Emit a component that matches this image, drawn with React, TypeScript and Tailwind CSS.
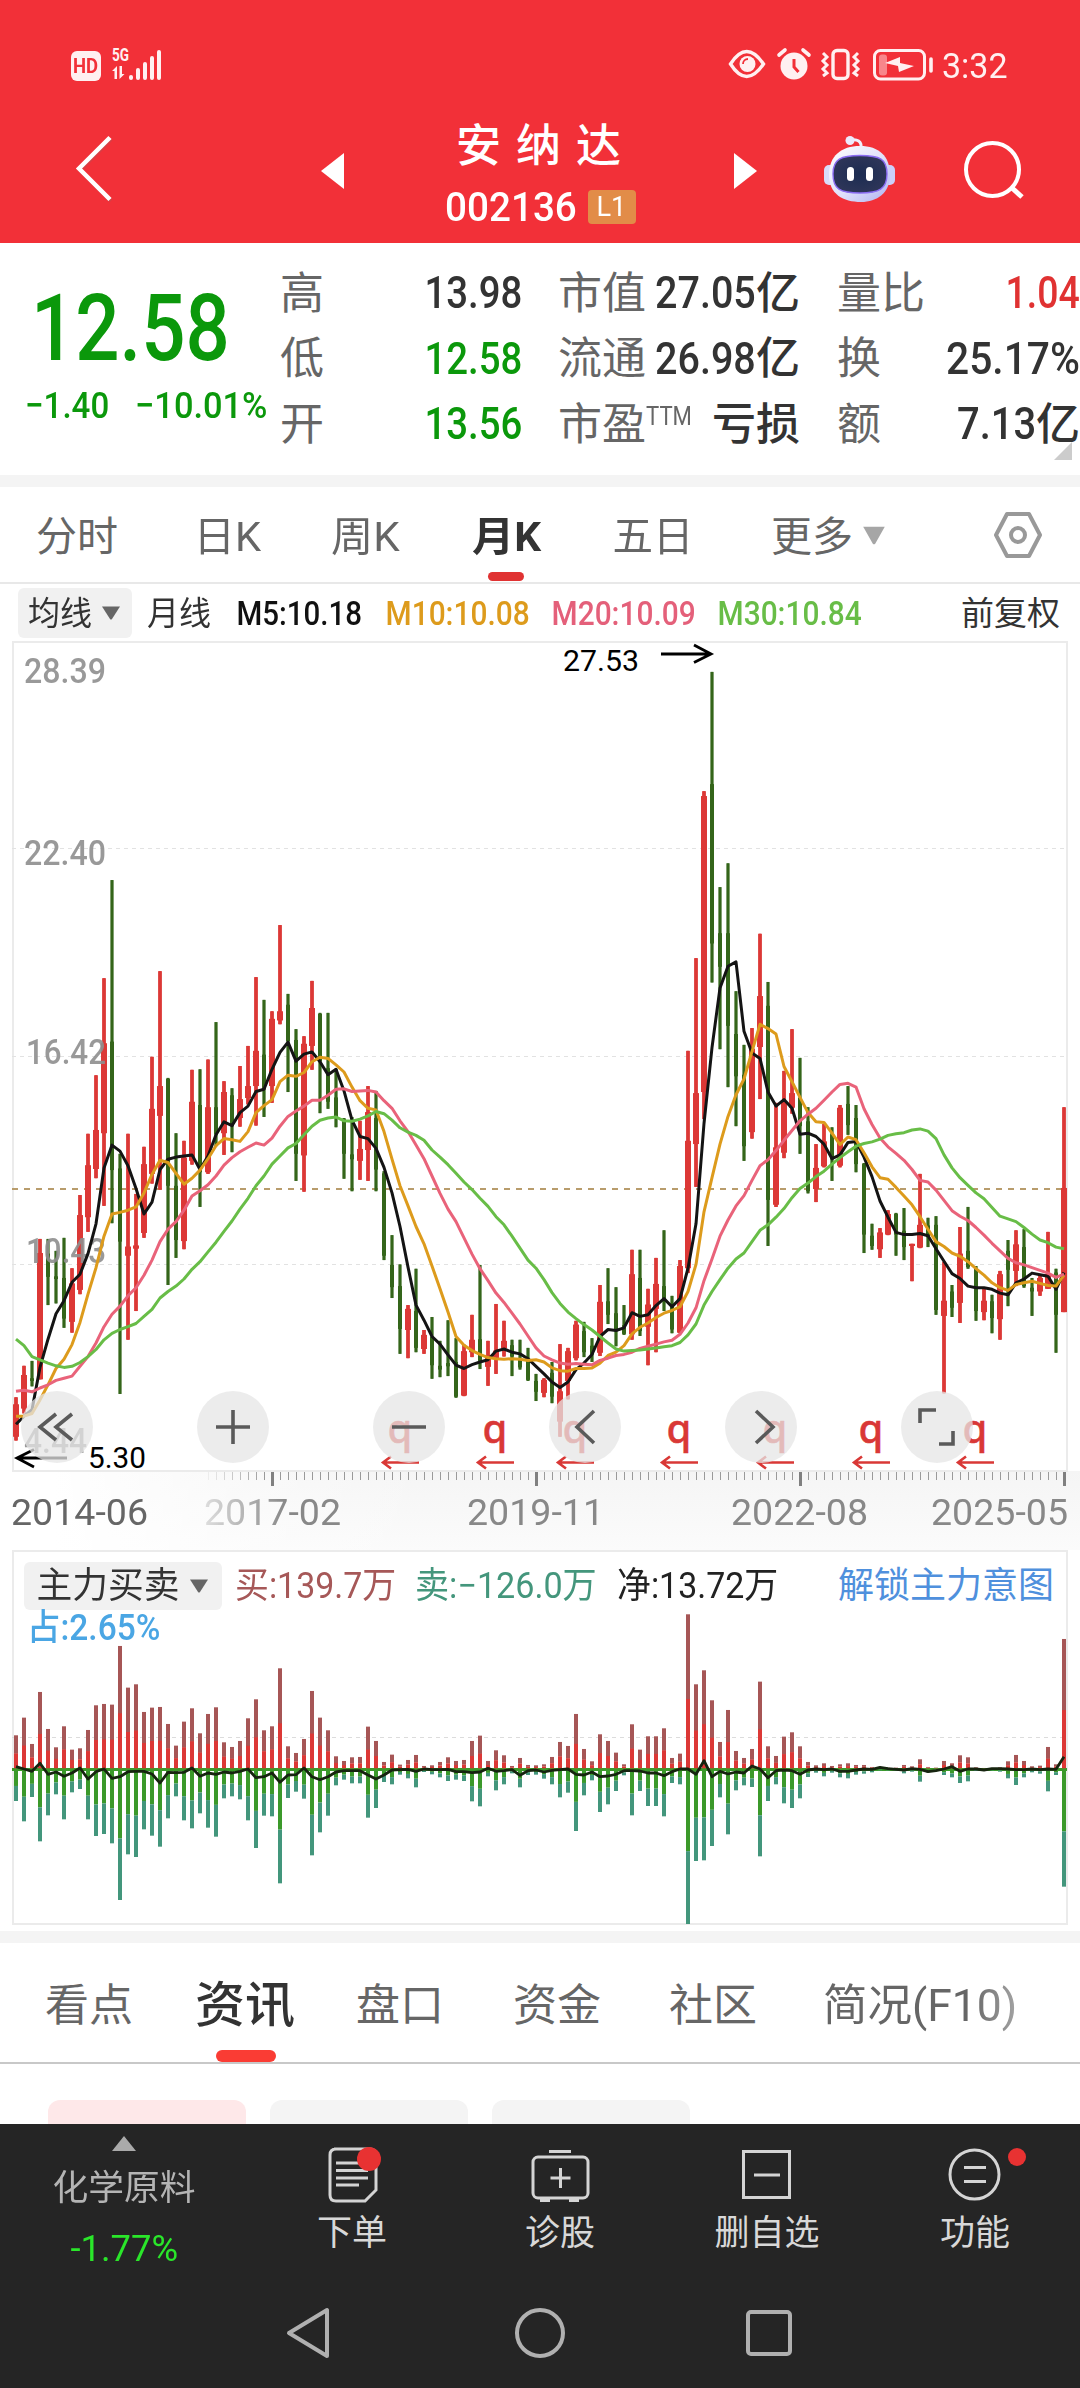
import React, { useLayoutEffect, useRef, useState } from "react";

/** Text condensed or stretched horizontally so that it fills exactly `w` pixels. */
function Fit({ w, className = "", children }: { w: number; className?: string; children: React.ReactNode }) {
  const ref = useRef<HTMLSpanElement>(null);
  const [s, setS] = useState(1);
  useLayoutEffect(() => {
    if (ref.current) setS(w / ref.current.offsetWidth);
  }, [w]);
  return (
    <span className={"inline-flex shrink-0 justify-center whitespace-nowrap leading-none " + className} style={{ width: w }}>
      <span ref={ref} className="shrink-0" style={{ transform: `scaleX(${s})` }}>
        {children}
      </span>
    </span>
  );
}

type Candle = [number, number, number, number, 0 | 1];

// high, low, body top, body bottom, rising
const CANDLES: Candle[] = [
  [1395,1475,1408,1468,1],[1337,1425,1354,1416,1],[1328,1375,1360,1365,0],[1103,1362,1129,1362,1],[1103,1225,1130,1173,0],
  [1125,1222,1172,1177,0],[1101,1267,1175,1250,0],[1157,1276,1185,1256,1],[1022,1205,1059,1197,1],[909,1090,967,1063,1],
  [801,991,902,974,1],[622,1042,742,908,1],[441,1074,739,976,0],[946,1389,973,1108,0],[909,1289,1117,1134,1],
  [1020,1236,1115,1121,1],[933,1101,965,1092,1],[767,1001,863,983,1],[609,1012,821,876,1],[806,1188,808,1005,0],
  [908,1138,1005,1105,0],[922,1122,953,1107,1],[791,966,850,959,1],[790,1044,856,980,0],[772,983,860,980,1],
  [703,932,860,910,0],[812,948,832,908,1],[825,943,838,895,0],[784,896,845,880,1],[747,855,821,843,1],
  [620,894,756,821,1],[662,878,763,827,0],[683,852,697,821,1],[524,707,683,700,1],[651,832,671,738,0],
  [716,996,736,946,0],[729,1016,743,949,1],[627,791,677,747,1],[686,871,688,775,0],[686,863,788,850,0],
  [789,897,842,878,0],[880,992,882,946,0],[878,1015,947,956,0],[885,994,937,959,1],[821,996,869,939,1],
  [830,1015,880,975,0],[978,1142,982,1134,0],[1096,1212,1151,1192,0],[1150,1315,1190,1269,0],[1225,1323,1232,1271,1],
  [1158,1312,1236,1304,0],[1271,1315,1280,1306,1],[1247,1361,1284,1336,0],[1291,1358,1337,1344,0],[1253,1356,1332,1338,0],
  [1286,1396,1330,1394,0],[1298,1393,1310,1392,1],[1243,1321,1289,1312,1],[1151,1343,1288,1328,0],[1291,1374,1317,1339,1],
  [1223,1352,1309,1323,1],[1254,1320,1291,1305,1],[1289,1356,1299,1320,0],[1289,1344,1325,1340,0],[1304,1365,1328,1363,0],
  [1352,1402,1365,1385,0],[1360,1395,1363,1387,1],[1330,1406,1350,1394,0],[1297,1468,1384,1440,1],[1304,1399,1310,1365,1],
  [1254,1327,1261,1323,1],[1256,1321,1273,1312,0],[1286,1330,1300,1316,0],[1188,1319,1219,1313,1],[1157,1260,1218,1243,0],
  [1192,1301,1240,1273,0],[1225,1280,1262,1278,0],[1123,1289,1168,1279,1],[1123,1282,1175,1273,0],[1195,1336,1224,1265,1],
  [1138,1312,1186,1232,1],[1087,1236,1190,1214,0],[1208,1277,1224,1270,0],[1142,1277,1153,1276,1],[756,1166,922,1157,1],
  [585,1007,834,928,1],[277,882,286,832,1],[57,630,264,558,0],[454,753,539,601,0],[410,823,539,710,0],
  [646,895,725,803,0],[745,959,800,932,0],[714,918,752,906,1],[540,845,655,749,1],[629,1116,673,1031,0],
  [852,1044,934,1040,1],[793,954,850,944,1],[716,872,834,861,1],[769,946,843,895,0],[860,1019,886,1015,0],
  [928,1035,972,1011,1],[891,971,923,969,1],[897,996,910,956,0],[856,971,861,968,1],[821,911,854,893,0],
  [856,980,880,965,0],[963,1129,965,1095,0],[1075,1123,1097,1116,0],[1083,1138,1091,1122,1],[1050,1096,1057,1095,1],
  [1055,1134,1057,1095,0],[1046,1142,1088,1118,0],[1112,1181,1112,1116,1],[983,1120,1077,1119,1],[1064,1118,1078,1100,0],
  [1061,1243,1077,1234,0],[1145,1388,1217,1245,1],[1188,1247,1200,1230,0],[1081,1258,1130,1221,1],[1044,1158,1125,1155,0],
  [1153,1254,1158,1236,0],[1195,1253,1217,1238,1],[1206,1277,1218,1249,0],[1162,1289,1168,1251,1],[1105,1227,1125,1160,0],
  [1087,1190,1113,1162,1],[1085,1193,1118,1190,0],[1175,1245,1193,1200,0],[1168,1208,1175,1200,1],[1090,1195,1168,1195,1],
  [1158,1313,1165,1243,0],[860,1238,1009,1238,1],
];

const MA5 = [1445,1430,1418,1340,1288,1241,1217,1183,1168,1130,1075,972,930,941,968,1010,1057,1035,975,956,952,950,948,975,950,911,887,894,870,858,831,827,790,759,740,775,762,758,776,800,790,830,884,914,918,936,971,1018,1080,1155,1225,1253,1283,1297,1317,1336,1342,1335,1330,1326,1310,1306,1312,1315,1324,1338,1352,1367,1377,1367,1344,1332,1316,1283,1270,1272,1267,1239,1246,1243,1226,1213,1228,1213,1157,1075,890,750,640,600,592,720,760,770,832,858,846,862,910,908,914,928,955,948,925,923,952,988,1033,1063,1091,1095,1095,1093,1097,1121,1144,1167,1176,1190,1193,1193,1196,1203,1206,1184,1177,1166,1169,1172,1196,1165];
const MA10 = [1430,1430,1425,1400,1372,1342,1325,1298,1257,1205,1156,1098,1057,1054,1050,1044,1018,984,958,962,982,1002,991,976,955,931,918,920,923,905,870,857,846,813,801,803,796,776,768,770,782,795,823,848,862,865,905,956,1005,1042,1080,1112,1153,1195,1238,1283,1299,1309,1316,1322,1324,1325,1324,1325,1327,1326,1330,1341,1346,1347,1342,1342,1341,1332,1318,1312,1300,1278,1266,1258,1248,1240,1235,1228,1200,1150,1053,990,928,877,837,808,757,707,715,725,785,813,842,870,887,888,908,929,915,920,944,970,990,993,1008,1024,1040,1062,1085,1108,1117,1129,1135,1145,1158,1170,1184,1193,1198,1187,1184,1181,1185,1189,1190,1170];
const MA20 = [1384,1382,1385,1378,1372,1364,1360,1356,1338,1320,1295,1265,1242,1227,1208,1193,1170,1142,1108,1085,1071,1050,1024,1014,1003,987,967,953,942,934,926,930,917,895,877,867,858,847,847,838,827,826,831,830,829,832,848,862,885,905,930,955,987,1019,1048,1071,1101,1131,1158,1180,1203,1220,1240,1260,1282,1304,1319,1326,1332,1334,1333,1334,1335,1327,1323,1318,1316,1312,1305,1301,1297,1293,1290,1279,1258,1230,1180,1140,1098,1068,1042,1023,995,968,957,940,921,903,885,873,862,847,832,818,816,823,863,892,917,933,945,958,975,995,998,1013,1032,1051,1061,1069,1082,1096,1111,1125,1139,1147,1151,1156,1161,1166,1174,1168];
const MA30 = [1288,1300,1320,1326,1332,1337,1340,1338,1331,1320,1307,1289,1277,1270,1265,1259,1246,1233,1212,1200,1190,1177,1159,1145,1127,1109,1089,1070,1048,1028,1005,987,965,950,935,927,911,895,884,880,878,885,886,882,876,868,872,884,898,906,912,921,939,952,966,982,998,1012,1028,1043,1062,1077,1098,1120,1142,1157,1178,1202,1222,1238,1250,1261,1271,1283,1295,1306,1310,1309,1308,1306,1304,1302,1300,1294,1280,1260,1225,1200,1178,1157,1140,1129,1108,1087,1077,1063,1047,1027,1010,1000,988,978,965,953,942,932,927,924,919,912,909,907,902,900,904,918,948,972,990,1004,1018,1029,1045,1061,1066,1071,1082,1094,1105,1110,1118,1121];

const SCALE = 1.8447;
const X = (i: number) => 16 + i * 8;
const Y = (v: number) => v / SCALE;
const line = (a: number[], f: (v: number) => number) => a.map((v, i) => `${X(i)},${f(v).toFixed(1)}`).join(" ");

const DIVIDENDS = [383, 478, 558, 662, 758, 854, 958];
const PRICES: [string, number][] = [["28.39", 42], ["22.40", 224], ["16.42", 423], ["10.43", 622], ["4.44", 812]];

function PriceChart() {
  return (
    <svg width="1080" height="832" viewBox="0 0 1080 832" className="block overflow-visible" fontFamily="Roboto, sans-serif">
      <rect x="13" y="1" width="1054" height="829" fill="none" stroke="#ebebeb" strokeWidth="2" />
      {[207.5, 415.5, 623.5].map((y) => (
        <line key={y} x1="12" x2="1066" y1={y} y2={y} stroke="#e2e2e2" strokeDasharray="4 4" />
      ))}
      <line x1="12" x2="1066" y1="548" y2="548" stroke="#b89c6c" strokeWidth="1.8" strokeDasharray="6 6" />
      {CANDLES.map(([h, l, t, b, up], i) => (
        <g key={i} fill={up ? "#dc3836" : "#34651a"}>
          <rect x={X(i) - 2} width="4" y={Y(h)} height={Y(l - h)} opacity={up ? 0.9 : 0.62} />
          <rect x={X(i) - 1} width="2" y={Y(h)} height={Y(l - h)} />
          <rect x={X(i) - (up ? 3 : 2)} width={up ? 6 : 4} y={Y(t)} height={Y(b - t)} />
        </g>
      ))}
      {PRICES.map(([p, y], i) => (
        <text key={p} x={i === 2 || i === 3 ? 26 : 24} y={y} fontSize="35" fontWeight="500" fill="#8f8f8f" opacity="0.9" textLength={i === 4 ? 63 : i === 2 || i === 3 ? 80 : 82} lengthAdjust="spacingAndGlyphs">
          {p}
        </text>
      ))}
      <g fill="none" strokeLinejoin="round">
        <polyline points={line(MA5, Y)} stroke="#141414" strokeWidth="3" />
        <polyline points={line(MA10, Y)} stroke="#dd9b1c" strokeWidth="3" />
        <polyline points={line(MA20, Y)} stroke="#e9637a" strokeWidth="3" />
        <polyline points={line(MA30, Y)} stroke="#68bd47" strokeWidth="3" />
      </g>
      <text x="563" y="30" fontSize="29" fill="#000" textLength="76" lengthAdjust="spacingAndGlyphs">27.53</text>
      <path d="M661 13H711M694 4l17 9l-17 8.5" fill="none" stroke="#000" strokeWidth="2.8" />
      <text x="88" y="827" fontSize="29" fill="#000" textLength="58" lengthAdjust="spacingAndGlyphs">5.30</text>
      <path d="M67 817H17M34 808.5l-17 8.5l17 9" fill="none" stroke="#000" strokeWidth="2.8" />
      {DIVIDENDS.map((x) => (
        <g key={x}>
          <text x={x + 17} y="802" fontSize="40" fontWeight="500" fontFamily="Noto Sans, sans-serif" fill="#d93836" stroke="#d93836" strokeWidth="0.5" textAnchor="middle">q</text>
          <path d={`M${x + 36} 821.5H${x}M${x + 8} 815.5l-8 6l8 6`} fill="none" stroke="#d93836" strokeWidth="2.6" />
        </g>
      ))}
    </svg>
  );
}

// top and bottom of each trading bar
const FLOWS = [
  583,782,530,843,609,770,453,903,564,825,619,762,556,837,626,756,622,746,567,837,493,887,489,881,491,909,315,1079,440,942,430,950,
  513,867,500,886,498,919,549,834,614,768,542,840,502,864,577,819,519,862,499,889,604,774,618,768,600,777,532,840,475,923,568,826,
  556,828,382,1029,616,773,636,754,594,775,450,945,530,876,568,826,646,735,660,718,649,729,648,729,557,832,600,803,663,725,641,732,
  671,703,657,714,642,741,675,695,673,702,663,711,649,722,660,718,657,722,600,783,584,798,660,708,628,750,643,732,675,699,651,741,
  672,704,673,703,670,715,648,732,603,771,615,757,519,872,624,765,661,720,580,815,600,792,635,752,670,705,550,825,626,752,586,797,
  586,797,562,828,651,728,638,732,220,1151,430,962,388,960,478,917,603,771,507,882,630,750,651,735,624,740,422,948,616,782,645,732,
  587,789,574,803,616,774,663,710,673,697,667,708,675,697,670,711,667,714,672,703,672,700,678,696,680,690,680,690,680,690,672,699,
  676,694,655,724,678,696,680,690,660,704,667,711,643,728,649,723,679,692,681,690,681,690,679,694,661,714,642,734,660,711,676,696,
  674,700,618,753,670,704,294,1039,
];
const NET = [678,685,692,668,701,694,707,697,682,715,693,685,713,708,693,692,692,700,727,695,696,695,682,707,697,701,694,697,692,685,711,708,697,725,703,702,682,708,717,708,694,690,690,690,703,715,703,688,687,686,692,685,687,687,686,693,693,696,694,683,692,690,687,704,690,688,694,689,687,685,701,703,694,708,706,701,690,690,691,697,697,705,693,685,685,701,660,708,692,700,694,697,676,685,711,690,688,690,701,688,685,687,685,692,692,688,685,686,680,684,686,688,684,686,693,690,685,678,692,685,685,688,684,684,685,687,687,685,687,685,686,648];

function FlowChart() {
  const bars = Array.from({ length: FLOWS.length / 2 }, (_, i) => [FLOWS[2 * i], FLOWS[2 * i + 1]]);
  return (
    <svg width="1080" height="375" viewBox="0 0 1080 375" className="block">
      <rect x="13" y="1" width="1054" height="373" fill="none" stroke="#ebebeb" strokeWidth="2" />
      <line x1="12" x2="1066" y1="187.5" y2="187.5" stroke="#dcdcdc" strokeDasharray="4 4" />
      <rect x="12" width="1055" y="218" height="3" fill="#3b992a" />
      {bars.map(([t, b], i) => {
        const up = (682 - t) / 3;
        const down = (b - 686) / 3;
        const x = X(i) - 2;
        return (
          <g key={i}>
            <rect x={x} width="4" y={218.3 - up} height={up * 0.56} fill="#a65656" />
            <rect x={x} width="4" y={218.3 - up * 0.45} height={up * 0.45} fill="#dc3836" />
            <rect x={x} width="4" y="219" height={down * 0.53} fill="#3b992a" />
            <rect x={x} width="4" y={219 + down * 0.53} height={down * 0.47} fill="#43967c" />
          </g>
        );
      })}
      <polyline points={line(NET, (v) => (v - 28) / 3)} fill="none" stroke="#16240f" strokeWidth="2.8" strokeLinejoin="round" />
    </svg>
  );
}

function Axis() {
  return (
    <svg width="1080" height="16" viewBox="0 0 1080 16" className="block">
      {Array.from({ length: 108 }, (_, k) => k + 24).map((i) => {
        const big = i === 32 || i === 65 || i === 98 || i === 131;
        return (
          <rect key={i} x={X(i) - (big ? 1 : 0)} y="0" width={big ? 3 : 1} height={big ? 15 : 9} fill={big ? "#808080" : "#9a9a9a"} opacity={Math.min(1, (i - 23) / 8)} />
        );
      })}
    </svg>
  );
}

function StatusBar() {
  return (
    <div className="flex h-[86px] items-end pb-[5px]">
      <div className="ml-[71px] flex h-[30px] w-[30px] items-center justify-center rounded-md bg-[#fff0f1] text-[20px] font-bold text-[#f23038]">
        <Fit w={25}>HD</Fit>
      </div>
      <svg className="ml-[10px]" width="54" height="34" viewBox="0 0 54 34" fill="#fff0f1">
        <text x="1" y="14" fontSize="18" fontWeight="700" fontFamily="Roboto, sans-serif" textLength="17" lengthAdjust="spacingAndGlyphs">5G</text>
        <path d="M1 24l5-5v13h-2.500v-8zM8.500 19v13l5-5h-2.500v-8z" />
        <rect x="18" y="28" width="4" height="5" rx="2" />
        <rect x="25" y="21" width="4" height="12" rx="2" />
        <rect x="32" y="15" width="4" height="18" rx="2" />
        <rect x="39" y="9" width="4" height="24" rx="2" />
        <rect x="46" y="3" width="4" height="30" rx="2" />
      </svg>
      <svg className="ml-[563px]" width="206" height="34" viewBox="0 0 206 34" fill="none" stroke="#fff0f1">
        <path d="M3 17Q19-8 36 17Q19 42 3 17z" strokeWidth="3.400" transform="translate(-.5 0)" />
        <circle cx="19.500" cy="17" r="8" fill="#fff0f1" stroke="none" />
        <path d="M15 17a5 5 0 0 1 5-5" stroke="#f23038" strokeWidth="1.800" />
        <circle cx="66" cy="19" r="13.500" fill="#fff0f1" stroke="none" />
        <path d="M66 12v8l4.500 5" stroke="#f23038" strokeWidth="3" />
        <path d="M51 8l6-5M75 3l6 5" strokeWidth="3.600" strokeLinecap="round" />
        <rect x="105" y="3.500" width="15" height="28" rx="4" strokeWidth="3.400" />
        <path d="M95 6l4 4-4 4 4 4-4 4 4 4-4 3M130 6l-4 4 4 4-4 4 4 4-4 4 4 3" strokeWidth="3" />
        <rect x="146.500" y="3.500" width="50" height="28.500" rx="6" strokeWidth="3" />
        <path d="M203 12v12" strokeWidth="3.600" strokeLinecap="round" />
        <rect x="151" y="7.500" width="8" height="21" rx="3" fill="#fff0f1" opacity=".45" stroke="none" />
        <path d="M156 16l15-6 0 6 14 3-15 6-1-6z" transform="translate(1 0)" fill="#fff0f1" stroke="none" />
      </svg>
      <Fit w={66} className="-mb-[3px] ml-[8px] text-[35px] text-[#fff0f1]">3:32</Fit>
    </div>
  );
}

function Robot() {
  return (
    <svg width="74" height="70" viewBox="0 0 74 70">
      <defs>
        <linearGradient id="shell" x1="0" y1="0" x2="1" y2="1">
          <stop offset="0" stopColor="#fff" />
          <stop offset=".55" stopColor="#dfe0fa" />
          <stop offset="1" stopColor="#aeb1f0" />
        </linearGradient>
        <radialGradient id="visor">
          <stop offset="0" stopColor="#1c2c52" />
          <stop offset="1" stopColor="#2d3558" />
        </radialGradient>
      </defs>
      <path d="M38 14c1-7-4-9-10-8" fill="none" stroke="#f0eefc" strokeWidth="3" />
      <circle cx="27" cy="6.500" r="4.500" fill="#ece9fb" />
      <rect x="1" y="31" width="12" height="20" rx="5" fill="#d9dcfa" />
      <rect x="60" y="31" width="12" height="20" rx="5" fill="#cccffa" />
      <path d="M37 12C56 12 67 22 67 41C67 59 54 68 38 68C20 68 6 60 6 41C6 22 18 12 37 12z" fill="url(#shell)" />
      <path d="M37 21.500C57 21.500 64 25 64 40C64 55 56 59 37 59C17 59 10 55 10 40C10 25 18 21.500 37 21.500z" fill="url(#visor)" stroke="#8a6cf2" strokeWidth="1.400" />
      <rect x="24" y="33" width="7" height="14" rx="3.500" fill="#fff" />
      <rect x="43" y="33" width="7" height="14" rx="3.500" fill="#fff" />
    </svg>
  );
}

function Header() {
  return (
    <header className="h-[243px] bg-[#f23038] text-white">
      <StatusBar />
      <div className="flex h-[157px]">
        <svg className="mt-[46px] ml-[72px]" width="46" height="74" viewBox="0 0 46 74" fill="none">
          <path d="M39 7L8 38L39 69" stroke="#c4474d" strokeWidth="4" opacity=".6" />
          <path d="M38 5.500L7 36.500L38 67.500" stroke="#fff" strokeWidth="4.500" />
        </svg>
        <svg className="mt-[66px] ml-[202px]" width="26" height="38" viewBox="0 0 26 38"><path d="M24 1v36L1 19z" fill="#fff" /></svg>
        <div className="ml-[59px] flex w-[270px] flex-col items-center">
          <div className="mt-[38px] pl-[12px] text-[45px] font-medium leading-none tracking-[15px]">安纳达</div>
          <div className="mt-[16px] flex h-[44px] items-center">
            <Fit w={132} className="text-[41px] font-medium">002136</Fit>
            <div className="ml-[11px] flex h-[34px] w-[48px] items-center justify-center rounded-[4px] bg-[#e28c48] text-[28px]">
              <Fit w={30}>L1</Fit>
            </div>
          </div>
        </div>
        <svg className="mt-[66px] ml-[57px]" width="26" height="38" viewBox="0 0 26 38"><path d="M2 1v36L25 19z" fill="#fff" /></svg>
        <div className="mt-[48px] ml-[65px]"><Robot /></div>
        <svg className="mt-[53px] ml-[65px]" width="64" height="64" viewBox="0 0 64 64" fill="none" stroke="#fff" strokeWidth="4">
          <circle cx="30.500" cy="30.500" r="26.500" />
          <path d="M50 49l10 9" strokeWidth="5" />
        </svg>
      </div>
    </header>
  );
}

function Num({ w, tail = "", color = "text-[#333]", children }: { w: number; tail?: string; color?: string; children?: string }) {
  return (
    <span className={"flex items-center justify-end text-[45px] font-medium leading-none " + color}>
      {children && <Fit w={w} className="-mt-[2px]">{children}</Fit>}
      {tail && <span className="text-[44px]">{tail}</span>}
    </span>
  );
}

const GREEN = "text-[#0b980b]";

function Quote() {
  const rows = [
    { a: "高", av: <Num w={98}>13.98</Num>, b: "市值", bv: <Num w={101} tail="亿">27.05</Num>, c: "量比", cv: <Num w={74} color="text-[#e03232]">1.04</Num> },
    { a: "低", av: <Num w={98} color={GREEN}>12.58</Num>, b: "流通", bv: <Num w={101} tail="亿">26.98</Num>, c: "换", cv: <Num w={134}>25.17%</Num> },
    { a: "开", av: <Num w={98} color={GREEN}>13.56</Num>, b: "市盈", sup: "TTM", bv: <Num w={0} tail="亏损" />, c: "额", cv: <Num w={79} tail="亿">7.13</Num> },
  ];
  return (
    <section className="relative flex h-[232px] bg-white">
      <div className={"w-[280px] " + GREEN}>
        <Fit w={199} className="mt-[40px] ml-[31px] text-[92px] font-medium">12.58</Fit>
        <div className="mt-[12px] flex h-[36px] items-center text-[37px] font-medium">
          <Fit w={84} className="ml-[25px]">−1.40</Fit>
          <Fit w={132} className="ml-[26px]">−10.01%</Fit>
        </div>
      </div>
      <div className="flex w-[800px] flex-col pt-[18px]">
        {rows.map((r, i) => (
          <div key={i} className="flex h-[65.500px] items-center text-[44px] leading-none text-[#666]">
            <div className="w-[44px]">{r.a}</div>
            <div className="flex w-[198px] justify-end">{r.av}</div>
            <div className="ml-[36px] flex w-[138px]">
              {r.b}
              {r.sup && <Fit w={46} className="text-[26px]">{r.sup}</Fit>}
            </div>
            <div className="-ml-[36px] flex w-[140px] justify-end">{r.bv}</div>
            <div className="ml-[37px] w-[100px]">{r.c}</div>
            <div className="flex w-[143px] justify-end">{r.cv}</div>
          </div>
        ))}
      </div>
      <svg className="absolute right-[8px] bottom-[15px]" width="18" height="18" viewBox="0 0 18 18"><path d="M18 0v18H0z" fill="#ccc" /></svg>
    </section>
  );
}

function Triangle({ w, h, color }: { w: number; h: number; color: string }) {
  return (
    <svg width={w} height={h} viewBox="0 0 20 14" preserveAspectRatio="none" className="shrink-0"><path d="M1 0.500h18L11 13q-1 1-2 0z" fill={color} /></svg>
  );
}

function PeriodTabs() {
  return (
    <nav className="relative flex h-[97px] items-center border-b-2 border-[#e8e8e8] bg-white pt-[5px] text-[41px] leading-none text-[#666]">
      <Fit w={82} className="ml-[36px]">分时</Fit>
      <Fit w={68} className="ml-[75px]">日K</Fit>
      <Fit w={69} className="ml-[70px]">周K</Fit>
      <div className="relative ml-[72px] flex text-[#333]">
        <Fit w={69} className="font-bold">月K</Fit>
        <div className="absolute top-[55px] left-[16px] h-[9px] w-[36px] rounded-[5px] bg-[#e03232]" />
      </div>
      <Fit w={81} className="ml-[71px]">五日</Fit>
      <Fit w={82} className="ml-[78px]">更多</Fit>
      <div className="-mt-[3px] ml-[9px]"><Triangle w={24} h={19} color="#a6a6a6" /></div>
      <svg className="-mt-[5px] ml-[106px]" width="52" height="50" viewBox="0 0 52 50" fill="none" stroke="#999" strokeWidth="4" strokeLinejoin="round">
        <path d="M15 4h22L48 25L37 46H15L4 25z" />
        <circle cx="26" cy="25" r="7" />
      </svg>
    </nav>
  );
}

function AverageRow() {
  return (
    <div className="flex h-[57px] items-center bg-white text-[33px] leading-none text-[#333]">
      <div className="ml-[18px] flex h-[50px] w-[114px] items-center rounded-[6px] bg-[#f1f1f1] pt-[2px]">
        <Fit w={64} className="ml-[10px]">均线</Fit>
        <div className="-mt-[2px] ml-[9px]"><Triangle w={20} h={14} color="#666" /></div>
      </div>
      <div className="flex items-center pt-[2px]">
        <Fit w={64} className="ml-[15px]">月线</Fit>
        <Fit w={126} className="ml-[25px] text-[#111]"><span className="font-medium">M5:10.18</span></Fit>
        <Fit w={144} className="ml-[24px] text-[#dd9b1c]"><span className="font-medium">M10:10.08</span></Fit>
        <Fit w={144} className="ml-[22px] text-[#e4607a]"><span className="font-medium">M20:10.09</span></Fit>
        <Fit w={144} className="ml-[22px] text-[#68bd47]"><span className="font-medium">M30:10.84</span></Fit>
        <Fit w={99} className="ml-[99px]">前复权</Fit>
      </div>
    </div>
  );
}

const TOOLS = [
  "M17 -13L1 0L17 13M33 -13L17 0L33 13",
  "M-17 0H17M0 -17V17",
  "M-17 0H17",
  "M9 -16L-8 0L9 16",
  "M-5 -16L12 0L-5 16",
  "M-17 -4V-17H-1M2 17H16V4",
];

function ToolButtons() {
  return (
    <div className="absolute top-[750px] left-[21px] flex gap-[104px]">
      {TOOLS.map((d, i) => (
        <button key={d} className="h-[72px] w-[72px] rounded-full bg-[#e6e6e6]/75">
          <svg width="72" height="72" viewBox="-36 -36 72 72" fill="none" stroke="#5a5a5a" strokeWidth="3.600">
            <path d={d} transform={i === 0 ? "translate(-18 0)" : undefined} />
          </svg>
        </button>
      ))}
    </div>
  );
}

function Dates() {
  return (
    <div className="h-[79px] bg-linear-to-b from-[#f5f5f5] to-[#fbfbfb]">
      <div className="h-full bg-linear-to-r from-white from-5% via-white/40 via-22% to-transparent to-40%">
        <Axis />
        <div className="flex h-[51px] items-center text-[37px] text-[#888]">
          <Fit w={137} className="ml-[11px] text-[#666]">2014-06</Fit>
          <div className="ml-[56px] flex [mask-image:linear-gradient(to_right,rgba(0,0,0,0.25),black_60%)]">
            <Fit w={137}>2017-02</Fit>
          </div>
          <Fit w={137} className="ml-[126px]">2019-11</Fit>
          <Fit w={137} className="ml-[127px]">2022-08</Fit>
          <Fit w={137} className="ml-[63px]">2025-05</Fit>
        </div>
      </div>
    </div>
  );
}

function FlowPanel() {
  return (
    <section className="relative h-[381px] bg-white">
      <FlowChart />
      <div className="absolute top-[12px] left-0 w-full text-[36px] leading-none">
        <div className="flex h-[48px] items-center">
          <div className="ml-[24px] flex h-[48px] w-[198px] items-center rounded-[6px] bg-[#f1f1f1] text-[#333]">
            <Fit w={143} className="ml-[12px]">主力买卖</Fit>
            <div className="ml-[10px]"><Triangle w={20} h={14} color="#666" /></div>
          </div>
          <Fit w={161} className="ml-[13px] text-[#a65858]">买:139.7万</Fit>
          <Fit w={182} className="ml-[19px] text-[#44967c]">卖:−126.0万</Fit>
          <Fit w={161} className="ml-[20px] text-[#222]">净:13.72万</Fit>
          <Fit w={216} className="ml-[60px] text-[#4f90dd]">解锁主力意图</Fit>
        </div>
        <Fit w={133} className="-mt-[3px] ml-[27px] font-medium text-[#4aa6e4]">占:2.65%</Fit>
      </div>
    </section>
  );
}

function InfoTabs() {
  return (
    <>
      <nav className="flex h-[121px] items-center border-b-2 border-[#c8c8c8] bg-white pt-[6px] text-[44px] leading-none text-[#666]">
        <Fit w={88} className="ml-[45px]">看点</Fit>
        <div className="relative ml-[62px] flex text-[#333]">
          <Fit w={100} className="text-[49px] font-medium">资讯</Fit>
          <div className="absolute top-[69px] left-[21px] h-[12px] w-[60px] rounded-full bg-[#fa3c34]" />
        </div>
        <Fit w={88} className="ml-[61px]">盘口</Fit>
        <Fit w={88} className="ml-[69px]">资金</Fit>
        <Fit w={88} className="ml-[68px]">社区</Fit>
        <div className="ml-[66px] flex [mask-image:linear-gradient(to_right,black_75%,rgba(0,0,0,0.6))]">
          <Fit w={194} className="py-[6px]">简况(F10)</Fit>
        </div>
      </nav>
      <div className="flex h-[60px] items-end gap-6 overflow-hidden bg-white pl-[48px]">
        <div className="h-[24px] w-[198px] rounded-t-[12px] bg-[#fee8e9]" />
        <div className="h-[24px] w-[198px] rounded-t-[12px] bg-[#f4f4f4]" />
        <div className="h-[24px] w-[198px] rounded-t-[12px] bg-[#f4f4f4]" />
      </div>
    </>
  );
}

function BottomBar() {
  return (
    <footer className="flex h-[265px] flex-col bg-[#252525]">
      <div className="flex h-[160px] text-[35px] leading-none text-[#d8d8d8]">
        <div className="flex w-[248px] flex-col items-center text-[#b4b4b4]">
          <svg className="mt-[11px]" width="26" height="16" viewBox="0 0 26 16"><path d="M13 1l12 15H1z" fill="#aaa" /></svg>
          <Fit w={143} className="mt-[20px]">化学原料</Fit>
          <Fit w={108} className="mt-[25px] text-[36px] text-[#2ae62a]">-1.77%</Fit>
        </div>
        <div className="ml-[68px] flex w-[72px] flex-col items-center">
          <svg className="mt-[20px]" width="72" height="60" viewBox="0 0 72 60" fill="none" stroke="#d4d4d4" strokeWidth="3">
            <path d="M18 5h36q6 0 6 6v35L49 57H20q-6 0-6-6V11q0-6 6-6z" />
            <path d="M20 19h26M20 26.500h32M20 34h32M20 41h23" />
            <circle cx="53" cy="15" r="12" fill="#e83232" stroke="none" />
          </svg>
          <span className="mt-[12px]">下单</span>
        </div>
        <div className="ml-[136px] flex w-[72px] flex-col items-center">
          <svg className="mt-[20px]" width="72" height="60" viewBox="0 0 72 60" fill="none" stroke="#d4d4d4" strokeWidth="3">
            <rect x="9" y="13" width="55" height="41" rx="5" />
            <path d="M25 7.500h22M36.500 24v20M26.500 34h20M16 56.500h10M45 56.500h10" />
          </svg>
          <span className="mt-[12px]">诊股</span>
        </div>
        <div className="ml-[118px] flex w-[106px] flex-col items-center">
          <svg className="mt-[20px]" width="72" height="60" viewBox="0 0 72 60" fill="none" stroke="#d4d4d4" strokeWidth="3">
            <rect x="12.500" y="7.500" width="46" height="46" />
            <path d="M23 31h26" />
          </svg>
          <span className="mt-[12px]">删自选</span>
        </div>
        <div className="ml-[119px] flex w-[72px] flex-col items-center">
          <svg className="mt-[20px] overflow-visible" width="72" height="60" viewBox="0 0 72 60" fill="none" stroke="#d4d4d4" strokeWidth="3">
            <circle cx="35.500" cy="30.500" r="24.500" />
            <path d="M25 23.500h22M25 37.500h22" />
            <circle cx="78" cy="13" r="9" fill="#e83232" stroke="none" />
          </svg>
          <span className="mt-[12px]">功能</span>
        </div>
      </div>
      <div className="flex h-[98px] items-center text-[#b0b0b0]">
        <svg className="ml-[284px]" width="48" height="54" viewBox="0 0 48 54" fill="none" stroke="currentColor" strokeWidth="4" strokeLinejoin="round"><path d="M43 4v46L5 27z" /></svg>
        <svg className="ml-[181px]" width="54" height="54" viewBox="0 0 54 54" fill="none" stroke="currentColor" strokeWidth="4"><circle cx="27" cy="27" r="23" /></svg>
        <svg className="ml-[176px]" width="52" height="52" viewBox="0 0 52 52" fill="none" stroke="currentColor" strokeWidth="4"><rect x="5" y="5" width="42" height="42" rx="3" /></svg>
      </div>
    </footer>
  );
}

export default function App() {
  return (
    <div className="h-[2388px] w-[1080px] overflow-hidden bg-white font-['Roboto','Noto_Sans_CJK_SC',sans-serif]">
      <Header />
      <Quote />
      <div className="h-[12px] bg-[#f4f4f4]" />
      <PeriodTabs />
      <AverageRow />
      <div className="relative h-[830px]">
        <PriceChart />
        <ToolButtons />
      </div>
      <Dates />
      <FlowPanel />
      <div className="h-[12px] bg-[#f4f4f4]" />
      <InfoTabs />
      <BottomBar />
    </div>
  );
}
